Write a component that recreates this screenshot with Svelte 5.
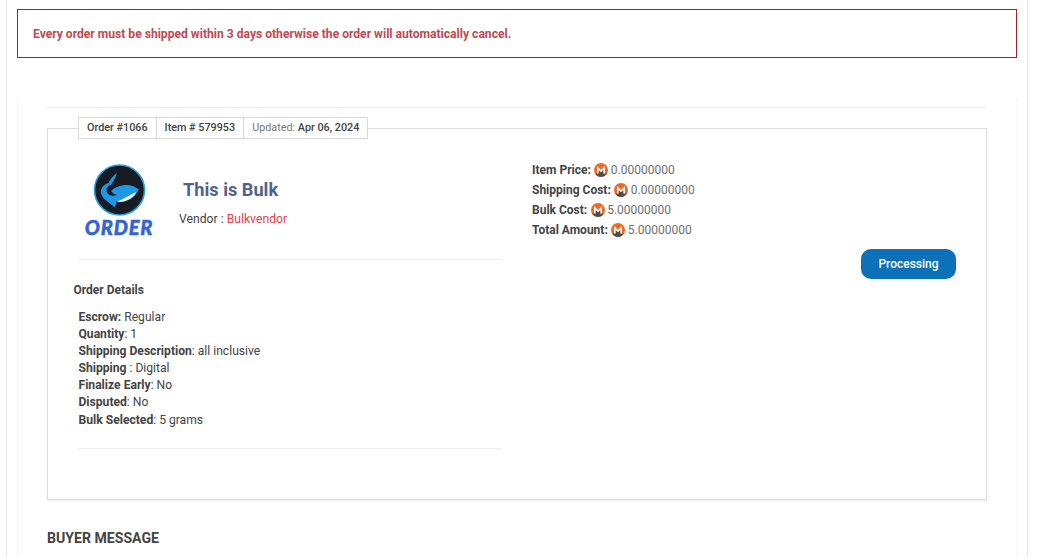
<script>
  const prices = [
    { label: 'Item Price:', value: '0.00000000' },
    { label: 'Shipping Cost:', value: '0.00000000' },
    { label: 'Bulk Cost:', value: '5.00000000' },
    { label: 'Total Amount:', value: '5.00000000' }
  ];
  const details = [
    ['Escrow:', ' Regular'],
    ['Quantity', ': 1'],
    ['Shipping Description', ': all inclusive'],
    ['Shipping', ' : Digital'],
    ['Finalize Early', ': No'],
    ['Disputed', ': No'],
    ['Bulk Selected', ': 5 grams']
  ];
</script>

<div class="page">
  <div class="shell">
    <div class="alert">Every order must be shipped within 3 days otherwise the order will automatically cancel.</div>
    <div class="panel">
      <div class="rule top"></div>
      <fieldset class="order">
        <legend class="tabs">
          <span class="tab">Order #1066</span>
          <span class="tab">Item # 579953</span>
          <span class="tab"><span class="muted">Updated:</span> Apr 06, 2024</span>
        </legend>
        <div class="cols">
          <div class="left">
            <div class="head">
              <svg class="logo" width="80" height="80" viewBox="0 0 80 80" aria-label="Order logo">
                <circle cx="39.5" cy="30" r="25" fill="#161b24" stroke="#2a9fe6" stroke-width="1.6"/>
                <path d="M37 13 C33 16 30 19 28.5 23 C23 25 20 29 21 33.5 C22 38 27 41 30 43.5 L35 47.5 L36.5 41.5 C43 43 51 40 55 35.5 L59 29.5 C55 26.5 50 24.5 45 25 C39 25.5 34 27.5 31 31 C32.5 33 34.5 34.5 37 35 C32 37 27.5 35 26.5 31 C26 28 28.5 25.5 31.5 24.5 C33.5 21 35.5 17.5 37 13 Z" fill="#1d97e6"/>
                <path d="M37.5 41.5 C44 38.5 50 35 56.5 32 C53 38 46 42.5 37.5 42 Z" fill="#ffffff"/>
                <text class="logotext" x="39" y="75" text-anchor="middle">ORDER</text>
              </svg>
              <div class="title">
                <h2>This is Bulk</h2>
                <div class="vendor">Vendor : <span class="red">Bulkvendor</span></div>
              </div>
            </div>
            <div class="rule"></div>
            <div class="section">Order Details</div>
            <ul class="details">
              {#each details as [k, v]}
                <li><b>{k}</b>{v}</li>
              {/each}
            </ul>
            <div class="rule"></div>
          </div>
          <div class="right">
            <ul class="prices">
              {#each prices as p}
                <li>
                  <b>{p.label}</b>
                  <svg class="xmr" width="14" height="14" viewBox="0 0 14 14" aria-hidden="true">
                    <circle cx="7" cy="7" r="7" fill="#f26822"/>
                    <path d="M1.1 10.6 H4.6 V6.8 L7 9.2 L9.4 6.8 V10.6 H12.9 A7 7 0 0 1 1.1 10.6 Z" fill="#4c4c4c"/>
                    <path d="M3 3 L7 7 L11 3 V10.6 H9.4 V6.8 L7 9.2 L4.6 6.8 V10.6 H3 Z" fill="#fff"/>
                  </svg>
                  <span class="val">{p.value}</span>
                </li>
              {/each}
            </ul>
            <div class="status"><span class="btn">Processing</span></div>
          </div>
        </div>
      </fieldset>
      <h3>BUYER MESSAGE</h3>
    </div>
  </div>
</div>

<style>
  :global(body) {
    margin: 0;
    background: #fff;
    font-family: Roboto, "Liberation Sans", sans-serif;
    color: #444;
  }
  .page {
    height: 557px;
    overflow: hidden;
    padding: 0 10px 0 6px;
    box-sizing: content-box;
  }
  .shell {
    border-left: 1px solid #e6e1e3;
    border-right: 1px solid #e6e1e3;
    padding: 9px 10px 0 10px;
    height: 557px;
    box-sizing: border-box;
  }
  .alert {
    border: 1px solid #a81e25;
    height: 49px;
    box-sizing: border-box;
    padding: 1px 0 0 15px;
    line-height: 46px;
    font-size: 12.1px;
    font-weight: 700;
    color: #c04a52;
  }
  .panel {
    margin-top: 40px;
    padding: 9px 29px 0 29px;
    border-left: 1px solid #f6f6f6;
    border-right: 1px solid #f6f6f6;
    height: 460px;
    box-sizing: border-box;
  }
  .rule {
    height: 1px;
    background: #eeeeee;
  }
  .rule.top {
    background: #ededed;
  }
  fieldset.order {
    margin: 9px 0 0;
    padding: 0 30px 50px 26px;
    border: 1px solid #dddddd;
    box-shadow: 0 1px 2px rgba(0, 0, 0, 0.08);
    height: 383px;
    box-sizing: border-box;
    min-width: 0;
  }
  legend.tabs {
    display: flex;
    margin-left: 4px;
    padding: 0;
    border: 1px solid #d9d9d9;
    background: #fff;
    font-size: 10.8px;
    font-weight: 500;
    color: #444;
  }
  .tab {
    padding: 0 8px;
    line-height: 20px;
    border-left: 1px solid #d9d9d9;
  }
  .tab:first-child {
    border-left: 0;
  }
  .muted {
    color: #777;
    font-weight: 400;
  }
  .cols {
    display: flex;
    gap: 30px;
    align-items: flex-start;
  }
  .left {
    width: 424px;
    margin-left: 4px;
    flex: none;
    padding-top: 15px;
  }
  .head {
    display: flex;
    height: 105px;
    margin-left: 2px;
  }
  .logo {
    flex: none;
    margin-top: 6px;
  }
  .logotext {
    font-family: Lato, sans-serif;
    font-style: italic;
    font-weight: 900;
    font-size: 20px;
    letter-spacing: 0.8px;
    fill: #3564cf;
    stroke: #3564cf;
    stroke-width: 0.5px;
  }
  .title {
    margin-left: 19px;
    padding-top: 24px;
  }
  h2 {
    margin: 0 0 0 4px;
    font-size: 18.2px;
    line-height: 24px;
    font-weight: 700;
    color: #52628f;
  }
  .vendor {
    margin-top: 9px;
    font-size: 12.2px;
    line-height: 16px;
    font-weight: 400;
    color: #444;
  }
  .red {
    color: #e5404c;
  }
  .section {
    margin: 22px 0 0 -4.5px;
    font-size: 12px;
    font-weight: 700;
    line-height: 16px;
  }
  ul {
    list-style: none;
    margin: 0;
    padding: 0;
  }
  .details {
    margin: 11px 0 19px 0.5px;
    font-size: 12.12px;
    line-height: 17.1px;
  }
  b {
    font-weight: 700;
  }
  .right {
    flex: 1;
    padding-top: 21px;
  }
  .prices {
    font-size: 12px;
    line-height: 20px;
  }
  .prices li {
    display: flex;
    align-items: center;
  }
  .xmr {
    margin: 0 3px 0 3.5px;
  }
  .val {
    color: #707070;
    margin-left: -0.5px;
  }
  .status {
    display: flex;
    justify-content: flex-end;
    margin-top: 9px;
  }
  .btn {
    width: 95px;
    height: 30px;
    line-height: 31px;
    text-align: center;
    background: #0c71b9;
    color: #fff;
    font-size: 12px;
    font-weight: 500;
    border-radius: 10px;
  }
  h3 {
    margin: 29px 0 0;
    font-size: 14.1px;
    line-height: 18px;
    font-weight: 700;
    color: #444;
  }
</style>
